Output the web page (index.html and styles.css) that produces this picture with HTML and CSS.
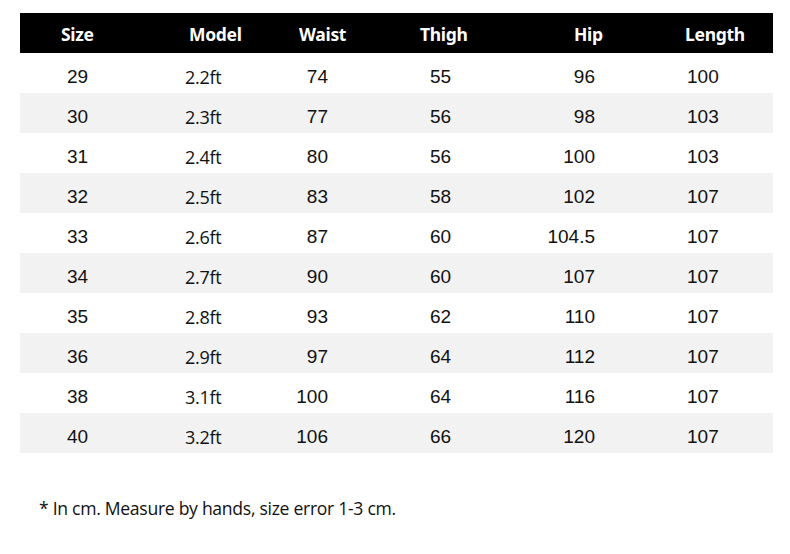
FILE: index.html
```html
<!DOCTYPE html>
<html>
<head>
<meta charset="utf-8">
<link rel="stylesheet" href="styles.css">
</head>
<body>
<table class="size-table">
  <thead>
    <tr><th>Size</th><th>Model</th><th>Waist</th><th>Thigh</th><th>Hip</th><th>Length</th></tr>
  </thead>
  <tbody>
    <tr><td>29</td><td>2.2ft</td><td>74</td><td>55</td><td>96</td><td>100</td></tr>
    <tr><td>30</td><td>2.3ft</td><td>77</td><td>56</td><td>98</td><td>103</td></tr>
    <tr><td>31</td><td>2.4ft</td><td>80</td><td>56</td><td>100</td><td>103</td></tr>
    <tr><td>32</td><td>2.5ft</td><td>83</td><td>58</td><td>102</td><td>107</td></tr>
    <tr><td>33</td><td>2.6ft</td><td>87</td><td>60</td><td>104.5</td><td>107</td></tr>
    <tr><td>34</td><td>2.7ft</td><td>90</td><td>60</td><td>107</td><td>107</td></tr>
    <tr><td>35</td><td>2.8ft</td><td>93</td><td>62</td><td>110</td><td>107</td></tr>
    <tr><td>36</td><td>2.9ft</td><td>97</td><td>64</td><td>112</td><td>107</td></tr>
    <tr><td>38</td><td>3.1ft</td><td>100</td><td>64</td><td>116</td><td>107</td></tr>
    <tr><td>40</td><td>3.2ft</td><td>106</td><td>66</td><td>120</td><td>107</td></tr>
  </tbody>
</table>
<p class="note">* In cm. Measure by hands, size error 1-3 cm.</p>
</body>
</html>
```
FILE: styles.css
```css
html, body {
  margin: 0;
  padding: 0;
  background: #ffffff;
}
body {
  padding: 13px 0 0 20px;
}
.size-table {
  border-collapse: collapse;
  table-layout: fixed;
  width: 753px;
}
.size-table th,
.size-table td {
  height: 40px;
  padding: 0;
  box-sizing: border-box;
  text-align: left;
  vertical-align: middle;
  white-space: nowrap;
}
.size-table thead tr {
  background: #000000;
}
.size-table th {
  color: #ffffff;
  font-family: "Noto Sans", "Open Sans", sans-serif;
  font-weight: 700;
  font-size: 17.5px;
  letter-spacing: -0.3px;
  padding-top: 1px;
}
.size-table td {
  color: #111111;
  font-family: "Liberation Sans", Arial, sans-serif;
  font-size: 19px;
  padding-top: 7px;
}
.size-table tbody tr:nth-child(even) {
  background: #f2f2f2;
}
/* column widths */
.size-table th:nth-child(1) { width: 130px; padding-left: 41px; }
.size-table th:nth-child(2) { width: 120px; padding-left: 39px; }
.size-table th:nth-child(3) { width: 110px; padding-left: 29px; }
.size-table th:nth-child(4) { width: 140px; padding-left: 40px; }
.size-table th:nth-child(5) { width: 130px; padding-left: 54px; }
.size-table th:nth-child(6) { width: 123px; padding-left: 35px; }

.size-table td:nth-child(1) { padding-left: 47px; }
.size-table td:nth-child(2) {
  padding-left: 35px;
  font-family: "Open Sans", "Noto Sans", sans-serif;
  font-size: 18px;
  letter-spacing: -0.3px;
}
.size-table td:nth-child(3) { text-align: right; padding-right: 52px; }
.size-table td:nth-child(4) { padding-left: 50px; }
.size-table td:nth-child(5) { text-align: right; padding-right: 55px; }
.size-table td:nth-child(6) { padding-left: 37px; }

.note {
  margin: 44px 0 0 19px;
  font-family: "Open Sans", "Noto Sans", sans-serif;
  font-size: 17.6px;
  line-height: 22px;
  color: #111111;
  letter-spacing: -0.3px;
}
```
